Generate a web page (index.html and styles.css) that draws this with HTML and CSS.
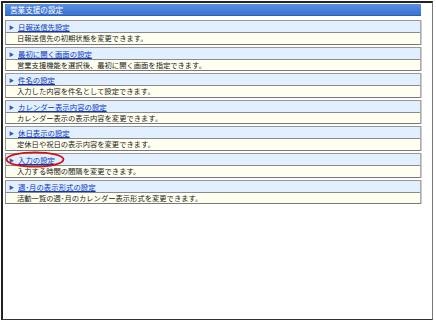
FILE: index.html
```html
<!DOCTYPE html>
<html lang="ja">
<head>
<meta charset="utf-8">
<link rel="stylesheet" href="styles.css">
</head>
<body>
<div class="frame">
  <div class="header">営業支援の設定</div>
  <div class="list">
    <div class="item">
      <div class="title"><span class="arrow">▶</span><a href="#">日報送信先設定</a></div>
      <div class="desc">日報送信先の初期状態を変更できます。</div>
    </div>
    <div class="item">
      <div class="title"><span class="arrow">▶</span><a href="#">最初に開く画面の設定</a></div>
      <div class="desc">営業支援機能を選択後、最初に開く画面を指定できます。</div>
    </div>
    <div class="item">
      <div class="title"><span class="arrow">▶</span><a href="#">件名の設定</a></div>
      <div class="desc">入力した内容を件名として設定できます。</div>
    </div>
    <div class="item">
      <div class="title"><span class="arrow">▶</span><a href="#">カレンダー表示内容の設定</a></div>
      <div class="desc">カレンダー表示の表示内容を変更できます。</div>
    </div>
    <div class="item">
      <div class="title"><span class="arrow">▶</span><a href="#">休日表示の設定</a></div>
      <div class="desc">定休日や祝日の表示内容を変更できます。</div>
    </div>
    <div class="item highlighted">
      <div class="title"><span class="arrow">▶</span><a href="#">入力の設定</a></div>
      <div class="desc">入力する時間の間隔を変更できます。</div>
      <svg class="circle" width="64" height="20" viewBox="0 0 64 20"><ellipse cx="31" cy="9.5" rx="28.5" ry="7.2" fill="none" stroke="#d81010" stroke-width="1.8"/></svg>
    </div>
    <div class="item">
      <div class="title"><span class="arrow">▶</span><a href="#">週･月の表示形式の設定</a></div>
      <div class="desc">活動一覧の週･月のカレンダー表示形式を変更できます。</div>
    </div>
  </div>
</div>
</body>
</html>
```

FILE: styles.css
```css
html, body {
  margin: 0;
  padding: 0;
  background: #fff;
}
body {
  padding: 1px 0 0 1px;
  font-family: "Noto Sans CJK JP", "Liberation Sans", sans-serif;
}
.frame {
  box-sizing: border-box;
  width: 432px;
  height: 319px;
  border: 1px solid #333;
  border-top: 2px solid #222;
  border-left: 2px solid #222;
  border-right-color: #777;
  padding: 1px 11px 0 2px;
  background: #fff;
}
.header {
  height: 11px;
  background: linear-gradient(#5a8fe0, #3a72d2);
  border-bottom: 1px solid #2b5fb8;
  color: #fff;
  font-size: 7.6px;
  line-height: 11px;
  padding-left: 5px;
  margin-bottom: 4px;
}
.list {
  display: flex;
  flex-direction: column;
  gap: 2px;
}
.item {
  position: relative;
  border: 1px solid #999;
  border-right: 1px solid #aaa;
  border-bottom: 1px solid #777;
  box-shadow: 1px 0 0 #ccc;
}
.title {
  height: 11px;
  background: #e2efff;
  border-bottom: 1px solid #8a8a8a;
  font-size: 7.4px;
  line-height: 11px;
  display: flex;
  align-items: center;
}
.arrow {
  color: #2b5cb5;
  font-size: 5px;
  width: 12px;
  padding-left: 3px;
  box-sizing: border-box;
}
.title a {
  color: #0a36b8;
  text-decoration: underline;
}
.desc {
  height: 10.6px;
  background: #fffff0;
  color: #222;
  font-size: 7.3px;
  line-height: 10.6px;
  padding-left: 11px;
}
.circle {
  position: absolute;
  left: -2px;
  top: -4px;
}
```
